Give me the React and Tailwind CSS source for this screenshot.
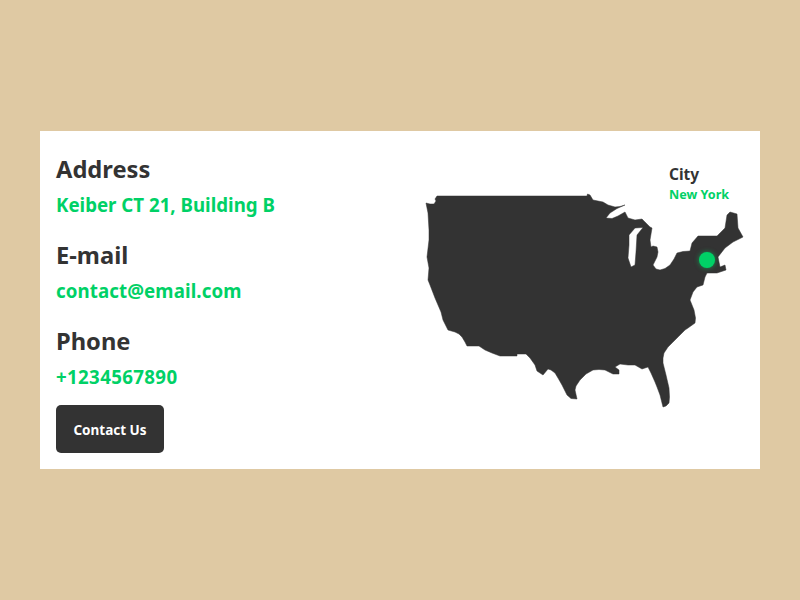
const items = [
  { label: "Address", value: "Keiber CT 21, Building B", spacing: "tracking-normal" },
  { label: "E-mail", value: "contact@email.com", spacing: "tracking-[0.1px]" },
  { label: "Phone", value: "+1234567890", spacing: "tracking-[0.35px]" },
];

// traced from the reference, coordinates are page pixels
const usa =
  "M437 196 L587 196 L587.5 194 L590 195 L593 200 L603 202 L608 205 L615 207 L620 206.5 L625 205 L617 208.5 L610 213 L606 218 L612 218.5 L618 216 L625 212 L628 218 L635 220 L642 219 L645 222 L650 227 L652 228 L650 240 L651 247 L653 246 L657 247 L658 252 L657 257 L653 265 L656 269 L660 270 L665 268.5 L670 265 L674 259 L677 253 L683 251.5 L690 251 L692 243 L698 236 L717 236 L720 233 L725 228 L727 215 L730 212 L737 214 L738 228 L743 237 L733 242 L725 248 L718 257 L720 267 L725 265 L726 270 L717 273 L707 273 L705 277 L703 285 L697 287 L693 292 L690 300 L692 305 L694 310 L695.5 318 L695 323 L688 328 L685 330 L679 336 L673 342 L668 347 L664 353 L663 358 L663 363 L666 375 L669 388 L669.5 397 L669 403 L666 406 L663 407 L660 395 L657 387 L655 382 L651 373 L648 367 L642 369 L635 365 L628 365 L620 364 L615 367 L619 370 L619 374 L613 374 L605 370 L599 369.5 L593 370 L586 374 L580 380 L576 386 L575 390 L577 399 L571 398.5 L567 395 L565 391 L562 385 L558 378 L555 373 L551 370 L548 369 L543 375 L537 371 L535 365 L530 358 L526 354 L517 354 L517 356 L500 356 L492 353 L485 350 L479 346 L467 346 L465 342 L462 337 L459 334 L455 332 L448 330 L443 320 L441 312 L435 298 L430 285 L428 280 L429 268 L427 257 L429 240 L429 230 L428 213 L426 203 L430 204 L434 204 L436 201 L435 199 Z " +
  // lake michigan
  "M629 235 L635 228 L643 227.5 L637 235 L636 252 L635 265 L631 267 L628 258 L629 245 Z";

const App = () => {
  return (
    <div className="flex min-h-screen items-center justify-center bg-[#dfc9a3] font-['Noto_Sans',sans-serif]">
      <div className="relative flex h-[338px] w-[720px] bg-white p-4">
        <div className="flex flex-col pt-[6px]">
          {items.map((item) => (
            <div key={item.label} className="mb-[20px]">
              <h2 className="text-[23.7px] leading-8 font-bold text-[#333]">
                {item.label}
              </h2>
              <p className={`mt-[6px] text-[18.7px] leading-7 font-bold text-[#00d166] ${item.spacing}`}>
                {item.value}
              </p>
            </div>
          ))}
          <button className="-mt-[6px] h-12 w-[108px] rounded-[5px] bg-[#333] pt-0.5 text-[13.5px] font-bold text-white">
            Contact Us
          </button>
        </div>

        {/* map */}
        <svg
          className="absolute top-[59px] left-[380px]"
          width="330"
          height="225"
          viewBox="420 190 330 225"
        >
          <path
            d={usa}
            fill="#333"
            fillRule="evenodd"
            stroke="#333"
            strokeWidth="0.5"
            strokeLinejoin="round"
          />
        </svg>
        <div className="absolute top-[121px] left-[659px] h-4 w-4 rounded-full bg-[#00d166] shadow-[0_0_5px_rgba(0,209,102,0.6)]"></div>
        <div className="absolute top-[32px] left-[629px]">
          <div className="text-[15.5px] leading-[22px] font-bold text-[#333]">City</div>
          <div className="text-[12.6px] leading-[20px] font-bold text-[#00d166]">New York</div>
        </div>
      </div>
    </div>
  );
};
export default App;
